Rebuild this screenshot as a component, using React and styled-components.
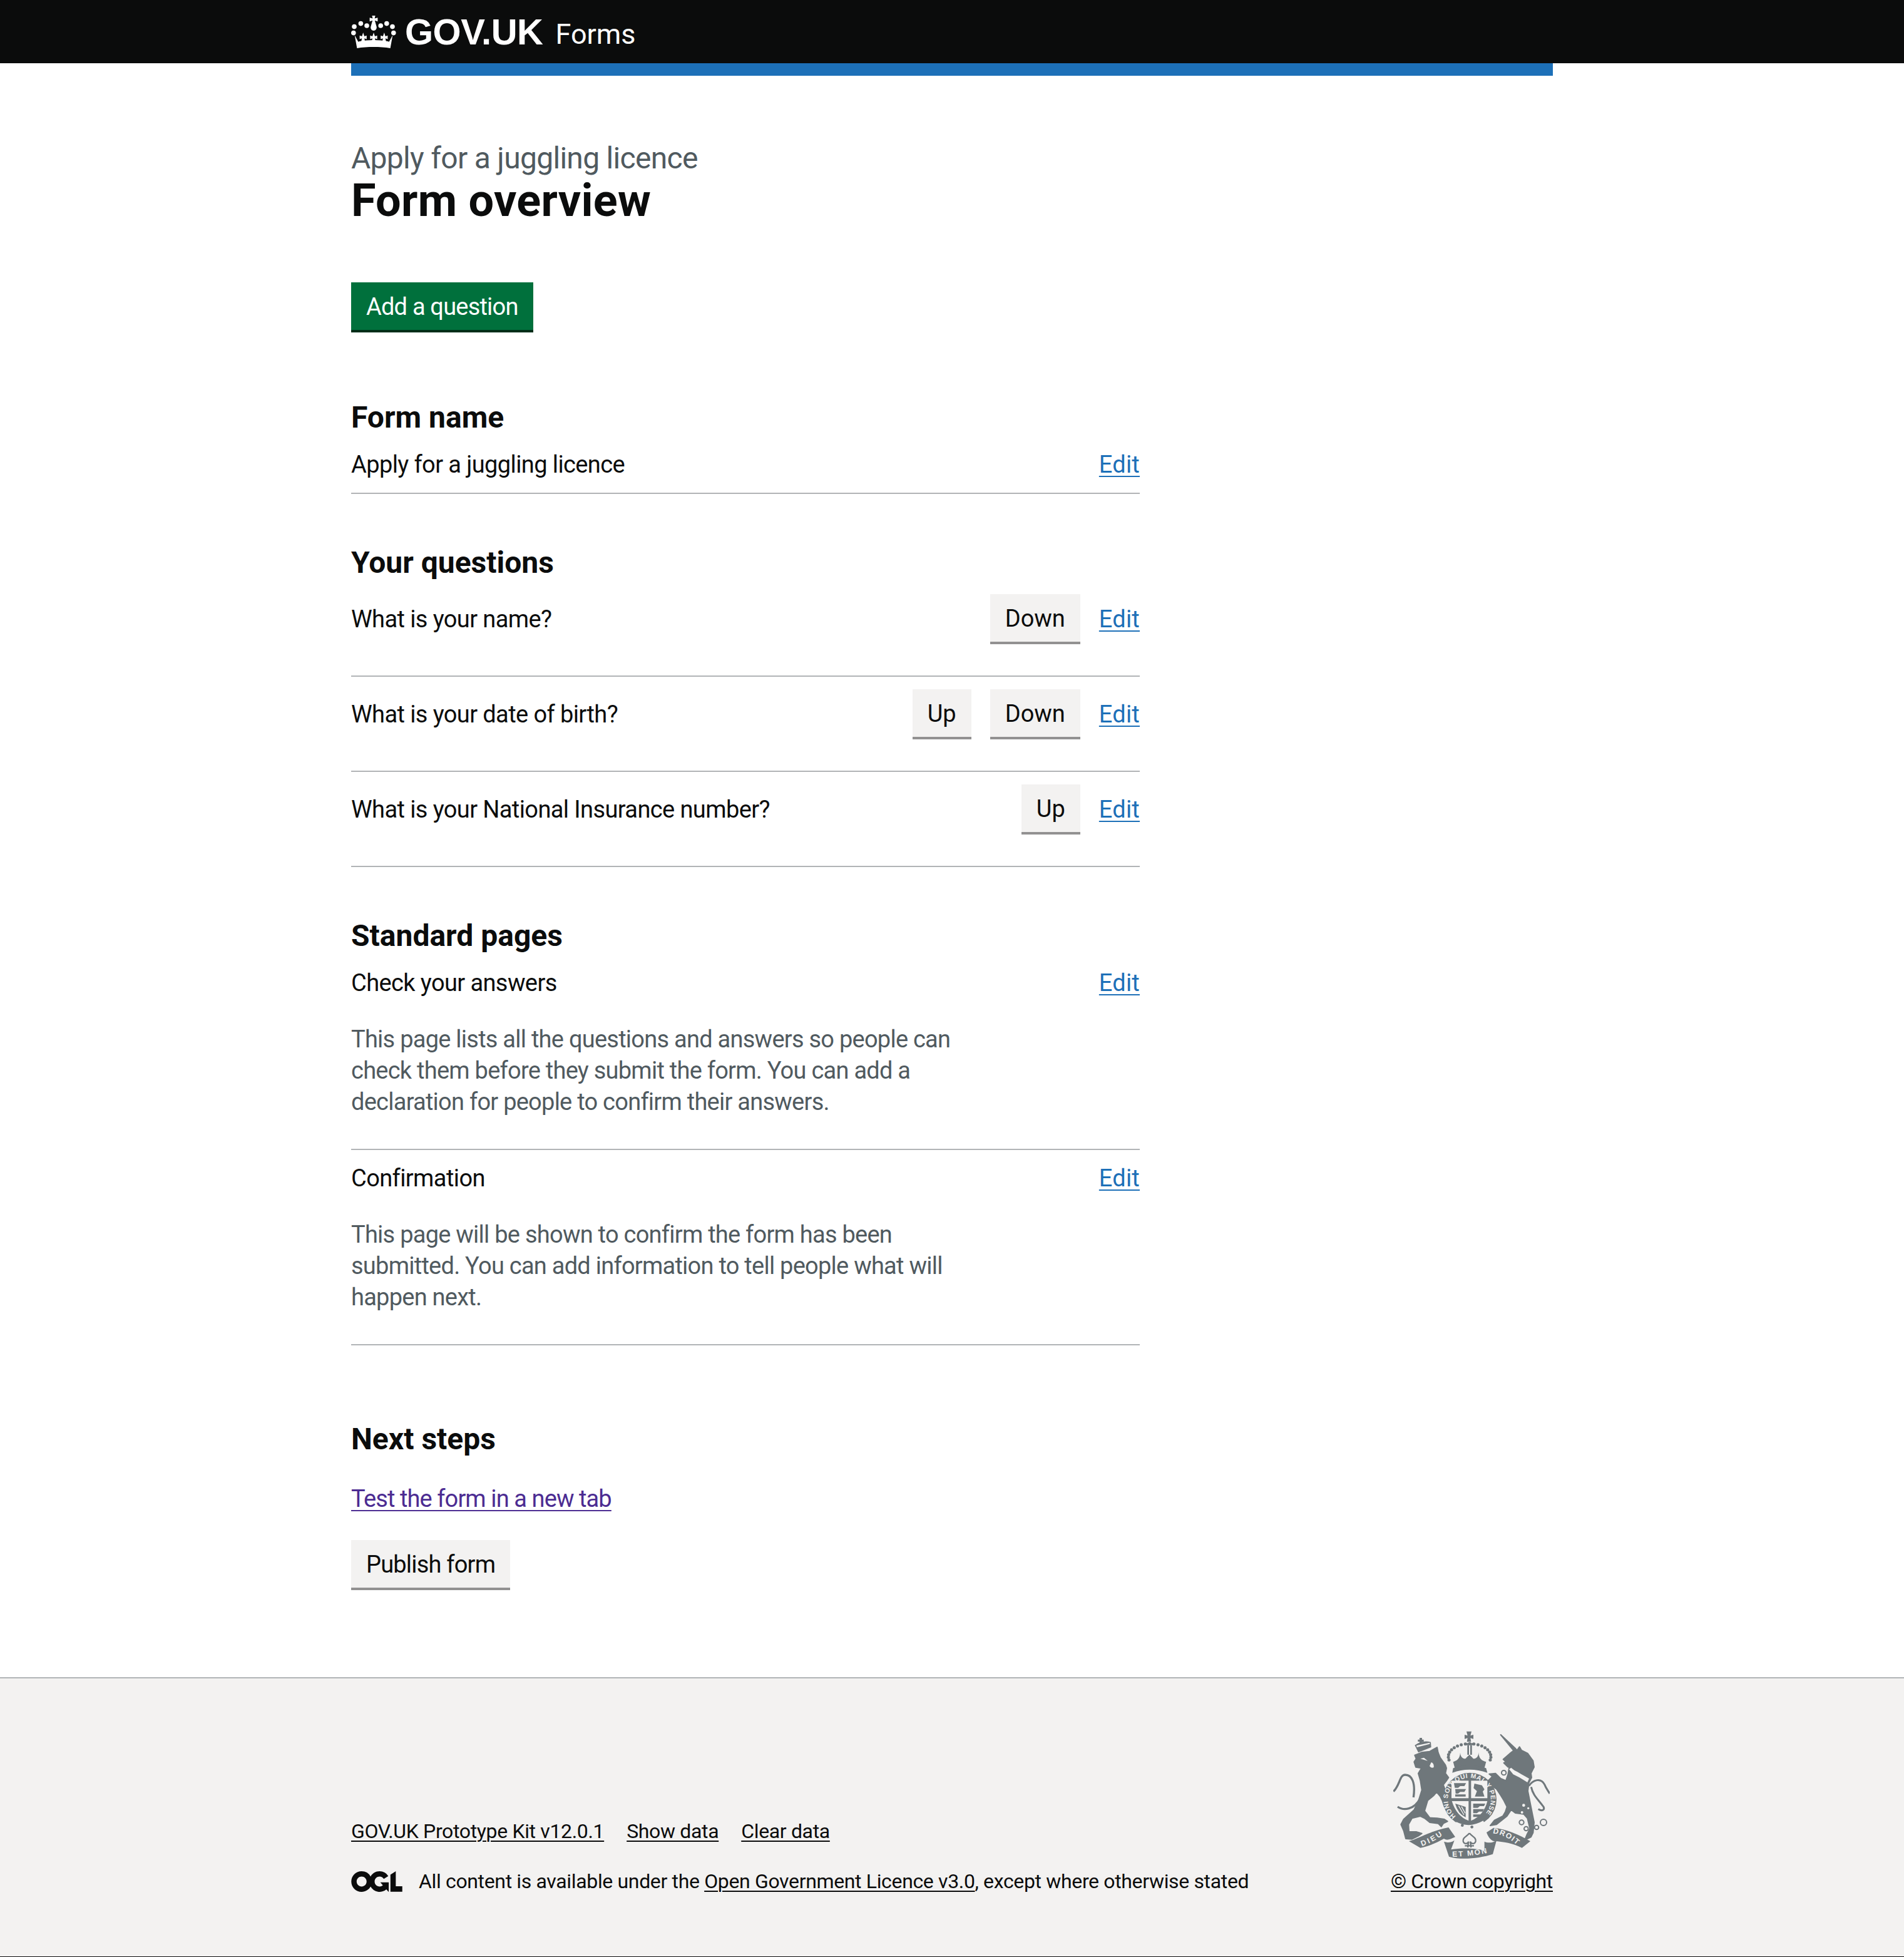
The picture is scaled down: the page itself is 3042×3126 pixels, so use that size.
import React from 'react';
import styled, { createGlobalStyle } from 'styled-components';

const font = 'Roboto, "Liberation Sans", sans-serif';
const crestGrey = '#6f777b';
const footerGrey = '#f3f2f1';

const GlobalStyle = createGlobalStyle`
  html, body { margin: 0; padding: 0; background: #0b0c0c; }
  body { font-family: ${font}; color: #0b0c0c; }
`;

const Page = styled.div`
  display: flex;
  flex-direction: column;
  min-height: 3125px;
  background: #fff;
`;

const Header = styled.header`
  height: 101px;
  background: #0b0c0c;
`;

const Container = styled.div`
  width: 1920px;
  margin: 0 auto;
`;

const HeaderInner = styled(Container)`
  display: flex;
  align-items: center;
  height: 101px;
  color: #fff;
`;

const Crown = styled.svg`
  width: 72px;
  height: 52px;
  margin: 0 14px 0 0;
  fill: #fff;
`;

const Logotype = styled.span`
  font-family: "Liberation Sans", sans-serif;
  font-weight: 700;
  font-size: 58px;
  line-height: 1;
  letter-spacing: -0.5px;
  margin: 0 20px 0 0;
`;

const ServiceName = styled.span`
  font-size: 45px;
  line-height: 1;
  font-weight: 400;
  margin-top: 8px;
`;

const BlueBar = styled(Container)`
  height: 20px;
  background: #1d70b8;
`;

const Main = styled(Container)`
  padding-top: 103px;
  flex: 1;
`;

const Caption = styled.div`
  font-size: 48px;
  line-height: 57px;
  letter-spacing: -0.7px;
  color: #505a5f;
`;

const Title = styled.h1`
  margin: 0 0 90px;
  font-size: 72px;
  line-height: 80px;
  letter-spacing: 0.3px;
  font-weight: 700;
`;

const Button = styled.button`
  display: block;
  box-sizing: border-box;
  height: 76px;
  margin: 0 0 4px;
  padding: 3px 24px 0;
  border: 0;
  border-radius: 0;
  font-family: ${font};
  font-size: 38px;
  line-height: 73px;
  letter-spacing: -0.8px;
  color: ${p => (p.$primary ? '#fff' : '#0b0c0c')};
  background: ${p => (p.$primary ? '#00703c' : footerGrey)};
  box-shadow: 0 4px 0 ${p => (p.$primary ? '#002d18' : '#929191')};
`;

const MoveButton = styled(Button)`
  letter-spacing: 0;
`;

const SectionTitle = styled.h2`
  margin: ${p => p.$top}px 0 20px;
  font-size: 48px;
  line-height: 60px;
  font-weight: 700;
`;

const Column = styled.div`
  width: 1260px;
`;

const Row = styled.div`
  border-bottom: 2px solid #b1b4b6;
  padding-bottom: ${p => p.$pad}px;
  margin-bottom: ${p => p.$gap}px;
`;

const RowHead = styled.div`
  display: flex;
  align-items: ${p => (p.$tall ? 'center' : 'flex-start')};
  height: ${p => (p.$tall ? '80px' : 'auto')};
`;

const RowLabel = styled.div`
  flex: 1;
  font-size: 38px;
  line-height: 50px;
  letter-spacing: -0.6px;
`;

const Actions = styled.div`
  display: flex;
  align-items: center;
  gap: 30px;
`;

const TextLink = styled.a`
  font-size: 38px;
  line-height: 50px;
  letter-spacing: -0.9px;
  color: #4c2c92;
  text-decoration: underline;
  text-decoration-thickness: 2px;
  text-underline-offset: 5px;
`;

const EditLink = styled(TextLink)`
  letter-spacing: 0.2px;
  color: #1d70b8;
`;

const Description = styled.p`
  margin: 40px 0 0;
  font-size: 38px;
  line-height: 50px;
  letter-spacing: -0.75px;
  color: #505a5f;
`;

const LinkLine = styled.div`
  margin: 40px 0 33px;
  line-height: 50px;
`;

const Footer = styled.footer`
  margin-top: 130px;
  border-top: 2px solid #b1b4b6;
  background: ${footerGrey};
  height: 444px;
`;

const FooterInner = styled(Container)`
  display: flex;
  justify-content: space-between;
  align-items: flex-end;
  height: 344px;
`;

const FooterLinks = styled.div`
  display: flex;
  gap: 36px;
  margin-bottom: 40px;
`;

const FooterLink = styled.a`
  font-size: 32px;
  line-height: 40px;
  letter-spacing: -0.35px;
  color: #0b0c0c;
  text-decoration: underline;
  text-decoration-thickness: 2px;
  text-underline-offset: 4px;
`;

const Licence = styled.div`
  display: flex;
  align-items: center;
  font-size: 32px;
  line-height: 40px;
  letter-spacing: -0.35px;
`;

const OglLogo = styled.svg`
  width: 82px;
  height: 33px;
  margin-right: 26px;
  fill: #0b0c0c;
`;

const Copyright = styled.div`
  display: flex;
  flex-direction: column;
  align-items: center;
`;

const Crest = styled.svg`
  width: 250px;
  height: 204px;
  margin-bottom: 16px;
`;

const questions = [
  { label: 'What is your name?', down: true },
  { label: 'What is your date of birth?', up: true, down: true },
  { label: 'What is your National Insurance number?', up: true },
];

const crownDots = [
  [2.5, 8.8], [1.9, 13.8], [7.7, 6.3], [12.5, 8],
  [23.6, 8], [28.4, 6.3], [33, 8.8], [33.9, 13.8],
];

const beads = Array.from({ length: 19 }, (_, i) => i);

const Fleur = ({ x }) => (
  <path d={`M${x} 13.500l1 3 1.800-.6v2.800l-1.800-.6.300 1.800c.3 1 .9 1.800 1.500 2.300h-5.600c.6-.5 1.200-1.300 1.500-2.300l.3-1.800-1.800.6v-2.800l1.800.6z`} />
);

const CrownMark = () => (
  <Crown viewBox="0 0 36 26" aria-hidden="true">
    {crownDots.map(([cx, cy]) => (
      <circle key={cx} cx={cx} cy={cy} r="1.900" />
    ))}
    <path d="M16.700 0h2.600l-.5 2.300 2.400-.7v3l-2.300-.7 1.400 4.900c.4 1.700-.7 3.200-2.300 3.200s-2.700-1.500-2.300-3.200l1.400-4.900-2.300.7v-3l2.400.7z" />
    <path d="M2.800 15.500l2.900 5.400 1-.4c7-1.400 15.600-1.400 22.600 0l1 .4 2.900-5.400-1.900 10.500c-8-1.300-18.600-1.300-26.600 0z" />
    <Fleur x={9.600} />
    <Fleur x={18} />
    <Fleur x={26.400} />
  </Crown>
);

const CrestMark = () => (
  <Crest viewBox="75 62 750 612" aria-hidden="true">
    <defs>
      <path id="garter" d="M375 470 A103 103 0 1 1 515 460" />
      <path id="scroll-left" d="M212 614 Q270 594 318 556" />
      <path id="scroll-mid" d="M358 664 Q440 664 526 646" />
      <path id="scroll-right" d="M552 552 Q620 560 678 618" />
    </defs>
    <g fill="none" stroke={crestGrey}>
      <path strokeWidth="10" d="M205 385 C175 440 125 445 96 425 M172 380 C182 310 165 272 132 272 C105 272 108 320 76 352" />
      <path strokeWidth="9" d="M725 325 C745 296 782 284 800 318 C808 338 815 345 825 362 M736 330 C745 372 770 390 795 425 C802 440 790 448 770 436" />
      <circle cx="605" cy="262" r="11" strokeWidth="6" />
      <circle cx="595" cy="345" r="11" strokeWidth="6" />
      <circle cx="690" cy="500" r="11" strokeWidth="6" />
      <circle cx="712" cy="530" r="10" strokeWidth="6" />
      <circle cx="762" cy="524" r="10" strokeWidth="6" />
      <circle cx="795" cy="500" r="15" strokeWidth="6" />
    </g>
    <g fill={crestGrey} stroke={crestGrey} strokeWidth="6" strokeLinejoin="round">
      {/* lion */}
      <path d="M178 178 L210 165 L250 160 L285 140 L290 165 L300 190 L325 225 L330 240 L325 265 L340 285 L330 300 L315 320 L322 340 L328 380 L342 400 L335 425 L320 425 L310 395 L300 375 L283 355 L270 370 L240 395 L225 445 L250 478 L285 480 L320 485 L335 495 L315 505 L305 520 L290 505 L250 500 L225 480 L205 470 L165 480 L148 510 L150 545 L185 545 L212 553 L195 565 L165 580 L135 578 L125 540 L112 510 L125 485 L175 440 L198 390 L212 345 L205 300 L195 265 L210 240 L183 235 L175 210 L185 195 Z" />
      {/* unicorn */}
      <path d="M590 80 L660 145 L668 155 L680 138 L690 155 L720 170 L745 205 L750 235 L735 265 L738 285 L725 310 L720 350 L730 400 L740 450 L750 500 L745 550 L735 570 L705 585 L715 560 L730 530 L718 480 L700 460 L660 455 L640 440 L620 470 L570 510 L540 515 L560 490 L600 470 L612 450 L620 425 L605 395 L590 370 L570 340 L540 320 L530 300 L550 280 L535 268 L565 265 L590 290 L615 300 L625 270 L630 240 L640 225 L625 235 L605 215 L615 210 L602 198 L640 165 L652 156 Z" />
    </g>
    <g fill={crestGrey}>
      {/* lion crown */}
      <path d="M195 165 L178 130 Q215 104 255 115 L257 140 Z" />
      <path d="M201 95 h12 v8 h8 v10 h-8 v10 h-12 v-10 h-8 v-10 h8 z" />
      {/* garter ring */}
      <circle cx="442" cy="390" r="128" />
      {/* royal crown */}
      <path d="M362 210 C380 205 395 195 396 165 C397 195 420 200 425 190 L440 175 L455 190 C460 200 483 195 484 165 C485 195 500 205 520 210 L512 240 Q440 222 370 240 Z" />
      <path d="M362 240 Q440 212 520 240 L526 262 Q440 232 358 262 Z" />
      <path d="M426 64 h24 l-5 20 l14 -4 v20 l-14 -4 l3 18 h-20 l3 -18 l-14 4 v-20 l14 4 z" />
      <rect x="430" y="130" width="8" height="46" />
      <rect x="444" y="130" width="8" height="46" />
      <rect x="418" y="120" width="46" height="10" />
      {beads.map(i => {
        const a = Math.PI * (1.08 - (i * 1.16) / 18);
        return <circle key={i} cx={441 + 102 * Math.cos(a)} cy={185 - 62 * Math.sin(a)} r="7.500" />;
      })}
      {/* motto scroll */}
      <path d="M150 590 C190 580 240 545 340 524 L372 570 C350 578 335 590 318 578 C280 600 240 615 205 622 Z" />
      <path d="M318 592 C330 596 350 600 368 586 L352 630 C400 622 470 622 512 636 L512 592 C530 600 552 598 570 586 L552 652 C490 672 400 682 342 664 Z" />
      <path d="M522 548 L556 526 C620 532 680 560 732 590 L692 622 C650 600 600 592 560 590 C545 590 530 570 522 548 Z" />
    </g>
    <path fill="none" stroke={crestGrey} strokeWidth="7" d="M440 552 C424 570 408 572 410 590 C414 606 432 604 436 592 L432 620 M440 552 C456 570 472 572 470 590 C466 606 448 604 444 592 L448 620 M418 612 H462" />
    {/* shield */}
    <g fill={footerGrey}>
      <path d="M354 300 H436 V384 H354 Z" />
      <path d="M448 300 H526 V384 H448 Z" />
      <path d="M356 398 H436 V492 Q378 470 356 398 Z" />
      <path d="M448 398 H526 Q510 465 448 492 Z" />
      <path d="M378 498 Q440 530 506 492 L512 504 Q440 548 372 510 Z" />
      <circle cx="700" cy="418" r="7" />
      <circle cx="692" cy="452" r="6" />
      <circle cx="722" cy="432" r="5" />
      <path d="M630 245 L640 238 L655 250 L670 258 L690 270 L705 278 L726 290 L718 308 L680 285 L650 270 Z" />
      <path d="M257 212 q14 4 12 24 q-12 6 -20 -6 z" />
      <path d="M205 195 L240 205 L222 190 Z" />
      <path d="M186 132 L250 118 L250 124 L188 140 Z" />
    </g>
    <g fill={crestGrey}>
      <path d="M366 312 h58 l-8 14 h-20 l-10 8 h-16z M372 340 h52 l-8 14 h-20 l-10 8 h-12z M372 366 h50 v10 h-50z" />
      <path d="M464 314 l36 8 l12 20 l-8 10 l8 24 h-46 l10 -26 l-16 -14z" />
      <path d="M458 410 h58 l-6 12 h-20 l-10 8 h-22z M458 436 h52 l-6 12 h-18 l-10 8 h-18z M458 462 h36 l-10 12 h-26z" />
      <path d="M372 410 l50 16 v50 q-38 -18 -50 -66z" />
    </g>
    <g stroke={footerGrey} strokeWidth="4">
      <path d="M388 420 l26 44 M402 424 l18 32" />
    </g>
    <g fill={crestGrey}>
      <circle cx="406" cy="514" r="7" />
      <circle cx="452" cy="522" r="7" />
    </g>
    <g fill={footerGrey} fontFamily="Liberation Sans, sans-serif" fontWeight="700">
      <text fontSize="31"><textPath href="#garter" textLength="486">HONI SOIT QUI MAL Y PENSE</textPath></text>
      <text fontSize="36"><textPath href="#scroll-left" textLength="112">DIEU</textPath></text>
      <text fontSize="36"><textPath href="#scroll-mid" textLength="168">ET MON</textPath></text>
      <text fontSize="36"><textPath href="#scroll-right" textLength="130">DROIT</textPath></text>
    </g>
  </Crest>
);

const App = () => (
  <Page>
    <GlobalStyle />
    <Header>
      <HeaderInner>
        <CrownMark />
        <Logotype>GOV.UK</Logotype>
        <ServiceName>Forms</ServiceName>
      </HeaderInner>
    </Header>
    <BlueBar />
    <Main as="main">
      <Caption>Apply for a juggling licence</Caption>
      <Title>Form overview</Title>
      <Button $primary>Add a question</Button>
      <Column>
        <SectionTitle $top={110}>Form name</SectionTitle>
        <Row $pad={20} $gap={0}>
          <RowHead>
            <RowLabel>Apply for a juggling licence</RowLabel>
            <EditLink href="#">Edit</EditLink>
          </RowHead>
        </Row>
        <SectionTitle $top={80}>Your questions</SectionTitle>
        {questions.map(q => (
          <Row key={q.label} $pad={50} $gap={20}>
            <RowHead $tall>
              <RowLabel>{q.label}</RowLabel>
              <Actions>
                {q.up && <MoveButton>Up</MoveButton>}
                {q.down && <MoveButton>Down</MoveButton>}
                <EditLink href="#">Edit</EditLink>
              </Actions>
            </RowHead>
          </Row>
        ))}
        <SectionTitle $top={80}>Standard pages</SectionTitle>
        <Row $pad={50} $gap={20}>
          <RowHead>
            <RowLabel>Check your answers</RowLabel>
            <EditLink href="#">Edit</EditLink>
          </RowHead>
          <Description>
            This page lists all the questions and answers so people can<br />
            check them before they submit the form. You can add a<br />
            declaration for people to confirm their answers.
          </Description>
        </Row>
        <Row $pad={50} $gap={0}>
          <RowHead>
            <RowLabel>Confirmation</RowLabel>
            <EditLink href="#">Edit</EditLink>
          </RowHead>
          <Description>
            This page will be shown to confirm the form has been<br />
            submitted. You can add information to tell people what will<br />
            happen next.
          </Description>
        </Row>
        <SectionTitle $top={120}>Next steps</SectionTitle>
      </Column>
      <LinkLine>
        <TextLink href="#">Test the form in a new tab</TextLink>
      </LinkLine>
      <Button>Publish form</Button>
    </Main>
    <Footer>
      <FooterInner>
        <div>
          <FooterLinks>
            <FooterLink href="#">GOV.UK Prototype Kit v12.0.1</FooterLink>
            <FooterLink href="#">Show data</FooterLink>
            <FooterLink href="#">Clear data</FooterLink>
          </FooterLinks>
          <Licence>
            <OglLogo viewBox="0 0 483.2 195.7" aria-hidden="true">
              <path d="M421.5 142.8V.1l-50.7 32.3v161.100h112.400v-50.700zm-122.300-9.600A47.120 47.120 0 0 1 221 97.800c0-26 21.100-47.100 47.100-47.100 16.700 0 31.400 8.700 39.700 21.800l42.700-27.200A97.630 97.630 0 0 0 268.100 0c-36.500 0-68.300 20.100-85.100 49.700A98 98 0 0 0 97.800 0C43.900 0 0 43.900 0 97.800s43.900 97.800 97.800 97.800c36.500 0 68.300-20.100 85.100-49.700a97.760 97.760 0 0 0 149.600 25.400l19.400 22.200h3v-87.800h-80l24.300 27.500zM97.800 145c-26 0-47.100-21.100-47.100-47.100s21.100-47.100 47.100-47.100 47.200 21 47.200 47S123.800 145 97.800 145" />
            </OglLogo>
            <span>
              All content is available under the{' '}
              <FooterLink href="#">Open Government Licence v3.0</FooterLink>, except where otherwise stated
            </span>
          </Licence>
        </div>
        <Copyright>
          <CrestMark />
          <FooterLink href="#">© Crown copyright</FooterLink>
        </Copyright>
      </FooterInner>
    </Footer>
  </Page>
);

export default App;
